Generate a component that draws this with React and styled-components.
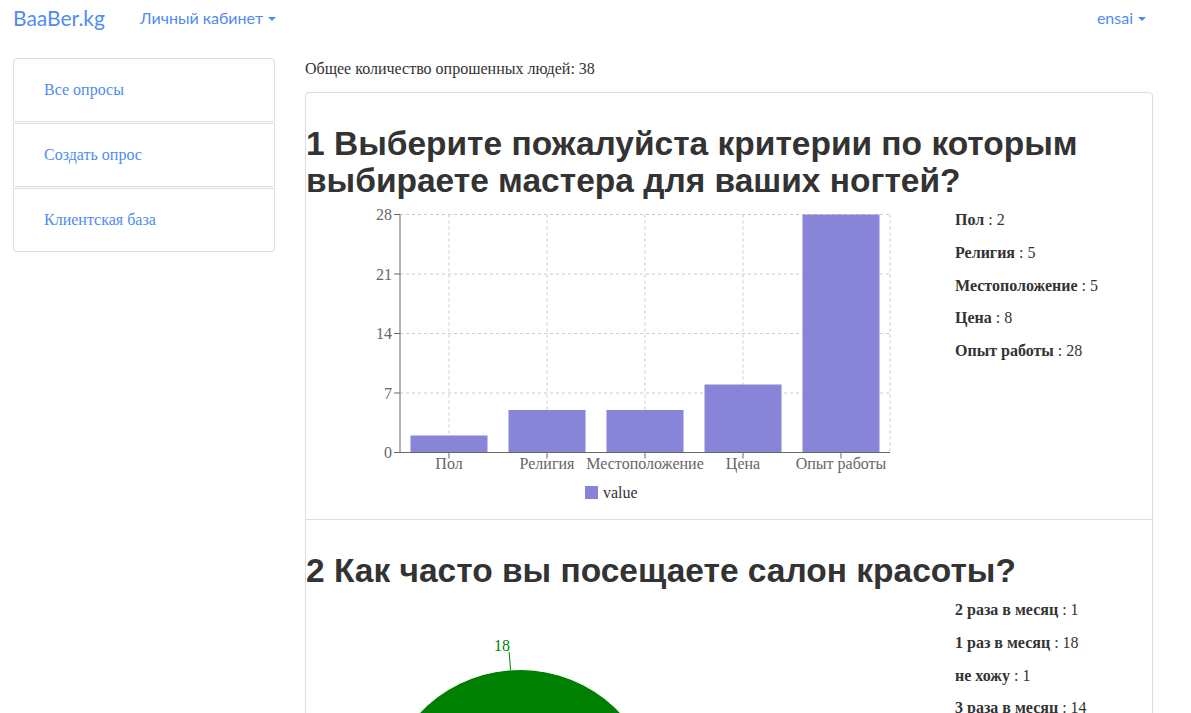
import React from 'react';
import styled, { createGlobalStyle } from 'styled-components';

const GlobalStyle = createGlobalStyle`
  html, body {
    margin: 0;
    padding: 0;
    background: #fff;
  }
  body {
    font-family: "Liberation Serif", "Times New Roman", serif;
    font-size: 16px;
    line-height: 1.42857;
    color: #333;
  }
  * { box-sizing: border-box; }
`;

const BLUE = '#4f8bf0';

const Navbar = styled.div`
  display: flex;
  align-items: center;
  height: 36px;
  padding: 0 45px 0 13px;
  font-family: Lato, "Open Sans", sans-serif;
`;

const Brand = styled.span`
  font-size: 21px;
  color: ${BLUE};
  margin-right: 35px;
`;

const NavItem = styled.span`
  display: flex;
  align-items: center;
  gap: 5px;
  font-size: 16px;
  color: ${BLUE};
  margin-left: ${(p) => (p.$right ? 'auto' : '0')};
`;

const Caret = styled.span`
  width: 0;
  height: 0;
  border-left: 4px solid transparent;
  border-right: 4px solid transparent;
  border-top: 4px solid ${BLUE};
  margin-top: 2px;
`;

const Layout = styled.div`
  display: flex;
  align-items: flex-start;
  gap: 30px;
  padding: 22px 38px 0 13px;
`;

const Sidebar = styled.div`
  width: 262px;
  flex-shrink: 0;
  display: flex;
  flex-direction: column;
  gap: 1px;
`;

const SideLink = styled.div`
  height: 64px;
  display: flex;
  align-items: center;
  padding-left: 30px;
  border: 1px solid #ddd;
  color: ${BLUE};
  font-size: 16px;
  &:first-child { border-radius: 4px 4px 0 0; }
  &:last-child { border-radius: 0 0 4px 4px; }
`;

const Main = styled.div`
  flex: 1;
  min-width: 0;
`;

const Total = styled.div`
  margin-bottom: 11px;
`;

const Panel = styled.div`
  border: 1px solid #ddd;
  border-radius: 4px;
`;

const Section = styled.div`
  border-top: ${(p) => (p.$first ? 'none' : '1px solid #ddd')};
  overflow: hidden;
`;

const Question = styled.h1`
  font-family: "Liberation Sans", Arial, sans-serif;
  font-weight: bold;
  font-size: 33.5px;
  line-height: 37px;
  color: #333;
  margin: 32px 0 10px;
`;

const Row = styled.div`
  display: flex;
  align-items: flex-start;
`;

const ChartBox = styled.div`
  width: 649px;
  flex-shrink: 0;
  svg { display: block; }
`;

const Stats = styled.div`
  flex: 1;
`;

const Stat = styled.p`
  margin: 0 0 10px;
  b { font-weight: bold; }
`;

const criteria = [
  { name: 'Пол', value: 2 },
  { name: 'Религия', value: 5 },
  { name: 'Местоположение', value: 5 },
  { name: 'Цена', value: 8 },
  { name: 'Опыт работы', value: 28 },
];

const visits = [
  { name: '2 раза в месяц', value: 1, color: '#0088fe' },
  { name: '1 раз в месяц', value: 18, color: '#008000' },
  { name: 'не хожу', value: 1, color: '#ffbb28' },
  { name: '3 раза в месяц', value: 14, color: '#ff8042' },
  { name: 'другое', value: 4, color: '#8884d8' },
];

const tickFont = { fontFamily: '"Liberation Serif", serif', fontSize: 16, fill: '#666' };

const BarChart = () => {
  const left = 94;
  const right = 584;
  const top = 5.5;
  const bottom = 243.5;
  const max = 28;
  const band = (right - left) / criteria.length;
  const y = (v) => bottom - (v / max) * (bottom - top);
  const ticks = [0, 7, 14, 21, 28];
  return (
    <svg width="600" height="310">
      {ticks.filter((t) => t > 0).map((t) => (
        <line key={t} x1={left} x2={right} y1={y(t)} y2={y(t)} stroke="#ccc" strokeDasharray="3 3" />
      ))}
      {criteria.map((c, i) => (
        <line key={c.name} x1={left + band * (i + 0.5)} x2={left + band * (i + 0.5)} y1={top} y2={bottom} stroke="#ccc" strokeDasharray="3 3" />
      ))}
      <line x1={right} x2={right} y1={top} y2={bottom} stroke="#ccc" strokeDasharray="3 3" />
      {criteria.map((c, i) => (
        <rect key={c.name} x={left + band * i + 10.5} y={y(c.value)} width={band - 21} height={bottom - y(c.value)} fill="#8884d8" />
      ))}
      <line x1={left} x2={left} y1={top} y2={bottom} stroke="#666" />
      <line x1={left} x2={right} y1={bottom} y2={bottom} stroke="#666" />
      {ticks.map((t) => (
        <g key={t}>
          <line x1={left - 6} x2={left} y1={y(t)} y2={y(t)} stroke="#666" />
          <text x={left - 8} y={y(t)} dy="0.36em" textAnchor="end" style={tickFont}>{t}</text>
        </g>
      ))}
      {criteria.map((c, i) => (
        <g key={c.name}>
          <line x1={left + band * (i + 0.5)} x2={left + band * (i + 0.5)} y1={bottom} y2={bottom + 6} stroke="#666" />
          <text x={left + band * (i + 0.5)} y={bottom + 5} dy="0.71em" textAnchor="middle" style={tickFont}>{c.name}</text>
        </g>
      ))}
      <rect x="279" y="277" width="13" height="13" fill="#8884d8" />
      <text x="297" y="283.5" dy="0.36em" style={{ fontFamily: '"Liberation Serif", serif', fontSize: 16, fill: '#333' }}>value</text>
    </svg>
  );
};

const PieChart = () => {
  const cx = 214;
  const cy = 208.5;
  const r = 138;
  const total = visits.reduce((s, v) => s + v.value, 0);
  let angle = 0;
  const pt = (a, rad) => [cx + rad * Math.cos((a * Math.PI) / 180), cy - rad * Math.sin((a * Math.PI) / 180)];
  const slices = visits.map((v) => {
    const start = angle;
    const end = angle + (v.value / total) * 360;
    angle = end;
    const [x1, y1] = pt(start, r);
    const [x2, y2] = pt(end, r);
    const large = end - start > 180 ? 1 : 0;
    return { ...v, start, end, d: `M${cx},${cy} L${x1},${y1} A${r},${r} 0 ${large} 0 ${x2},${y2} Z` };
  });
  const main = slices[1];
  const mid = (main.start + main.end) / 2;
  const [lx1, ly1] = pt(mid, r);
  const [lx2, ly2] = pt(mid, r + 18);
  return (
    <svg width="600" height="360">
      {slices.map((s) => (
        <path key={s.name} d={s.d} fill={s.color} stroke="#fff" />
      ))}
      <line x1={lx1 + 2} y1={ly1} x2={lx2 + 2} y2={ly2} stroke="#008000" />
      <text x={lx2 + 3} y={ly2 - 1} textAnchor="end" style={{ fontFamily: '"Liberation Serif", serif', fontSize: 16, fill: '#008000' }}>18</text>
    </svg>
  );
};

const App = () => (
  <>
    <GlobalStyle />
    <Navbar>
      <Brand>BaaBer.kg</Brand>
      <NavItem>Личный кабинет <Caret /></NavItem>
      <NavItem $right>ensai <Caret /></NavItem>
    </Navbar>
    <Layout>
      <Sidebar>
        <SideLink>Все опросы</SideLink>
        <SideLink>Создать опрос</SideLink>
        <SideLink>Клиентская база</SideLink>
      </Sidebar>
      <Main>
        <Total>Общее количество опрошенных людей: 38</Total>
        <Panel>
          <Section $first>
            <Question>1 Выберите пожалуйста критерии по которым выбираете мастера для ваших ногтей?</Question>
            <Row>
              <ChartBox><BarChart /></ChartBox>
              <Stats>
                {criteria.map((c) => (
                  <Stat key={c.name}><b>{c.name}</b> : {c.value}</Stat>
                ))}
              </Stats>
            </Row>
          </Section>
          <Section>
            <Question>2 Как часто вы посещаете салон красоты?</Question>
            <Row>
              <ChartBox><PieChart /></ChartBox>
              <Stats>
                {visits.slice(0, 4).map((v) => (
                  <Stat key={v.name}><b>{v.name}</b> : {v.value}</Stat>
                ))}
              </Stats>
            </Row>
          </Section>
        </Panel>
      </Main>
    </Layout>
  </>
);

export default App;
